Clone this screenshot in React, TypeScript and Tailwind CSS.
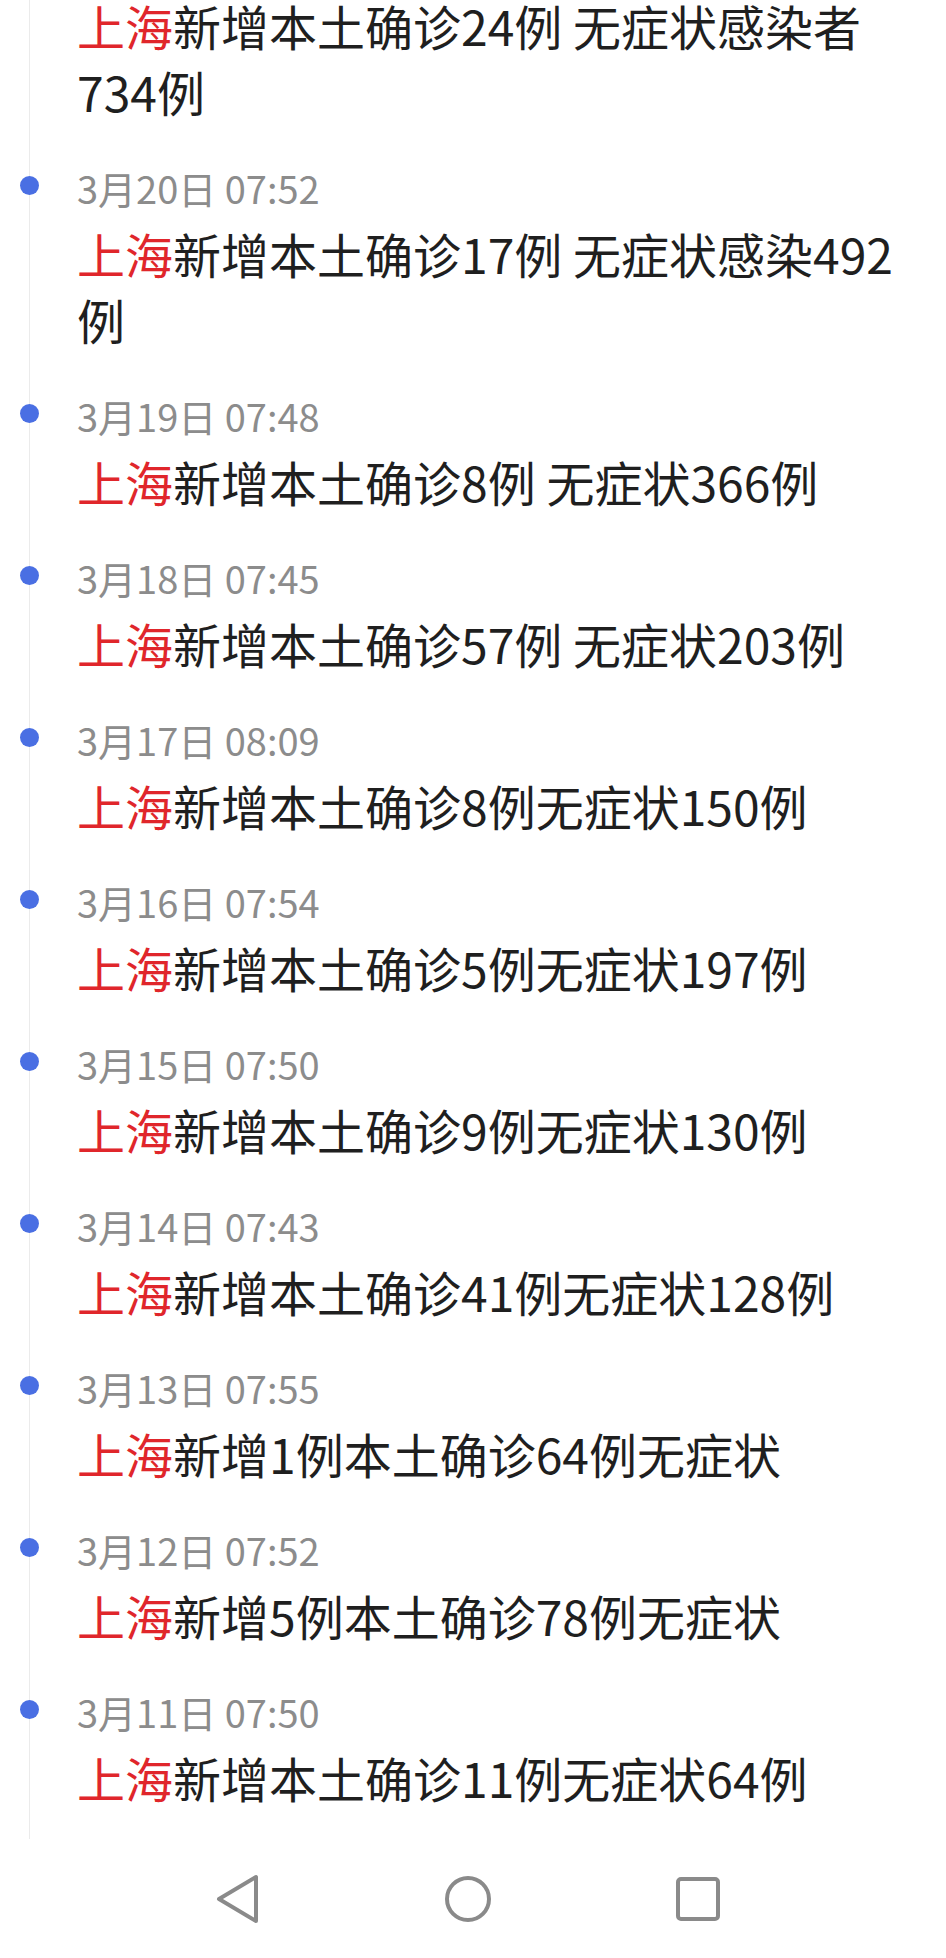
import React from 'react';

type Report = {
  id: number;
  time: string;
  text: string;
};

// first entry is scrolled past the top, only its headline is visible
const reports: Report[] = [
  { id: 0, time: '', text: '新增本土确诊24例 无症状感染者\n734例' },
  { id: 1, time: '3月20日 07:52', text: '新增本土确诊17例 无症状感染492\n例' },
  { id: 2, time: '3月19日 07:48', text: '新增本土确诊8例 无症状366例' },
  { id: 3, time: '3月18日 07:45', text: '新增本土确诊57例 无症状203例' },
  { id: 4, time: '3月17日 08:09', text: '新增本土确诊8例无症状150例' },
  { id: 5, time: '3月16日 07:54', text: '新增本土确诊5例无症状197例' },
  { id: 6, time: '3月15日 07:50', text: '新增本土确诊9例无症状130例' },
  { id: 7, time: '3月14日 07:43', text: '新增本土确诊41例无症状128例' },
  { id: 8, time: '3月13日 07:55', text: '新增1例本土确诊64例无症状' },
  { id: 9, time: '3月12日 07:52', text: '新增5例本土确诊78例无症状' },
  { id: 10, time: '3月11日 07:50', text: '新增本土确诊11例无症状64例' },
];

function NavBar() {
  return (
    <nav className="h-[119px] flex items-center pl-[123px] bg-white">
      <div className="w-[230px] flex justify-center">
        <svg width="44" height="50" viewBox="0 0 44 50" fill="none" stroke="#8a8a8a" strokeWidth="4" strokeLinejoin="round">
          <path d="M3 25 L40 3 L40 47 Z" />
        </svg>
      </div>
      <div className="w-[230px] flex justify-center">
        <svg width="46" height="46" viewBox="0 0 46 46" fill="none" stroke="#8a8a8a" strokeWidth="4">
          <circle cx="23" cy="23" r="21" />
        </svg>
      </div>
      <div className="w-[230px] flex justify-center">
        <svg width="44" height="44" viewBox="0 0 44 44" fill="none" stroke="#8a8a8a" strokeWidth="4">
          <rect x="2" y="2" width="40" height="40" rx="3" />
        </svg>
      </div>
    </nav>
  );
}

export default function App() {
  return (
    <main className="w-[946px] h-[1958px] flex flex-col bg-white font-['Noto_Sans_CJK_SC','Noto_Sans',sans-serif]">
      <div className="h-[1839px] overflow-hidden">
        <ul className="-mt-[60px] ml-[29px] border-l border-[#ebebeb]">
          {reports.map((r) => (
            <li key={r.id} className="relative pl-[47px] pb-[44px]">
              {r.time && (
                <span className="absolute left-[-10px] top-[8px] w-[19px] h-[19px] rounded-full bg-[#4a6fe3]" />
              )}
              <p className="h-[40px] text-[38px] leading-[40px] text-[#8c8c8c]">{r.time}</p>
              <p className="mt-[12px] text-[48px] leading-[66px] text-[#1f1f1f] whitespace-pre-line">
                <span className="text-[#e0262b]">上海</span>
                {r.text}
              </p>
            </li>
          ))}
        </ul>
      </div>
      <NavBar />
    </main>
  );
}
